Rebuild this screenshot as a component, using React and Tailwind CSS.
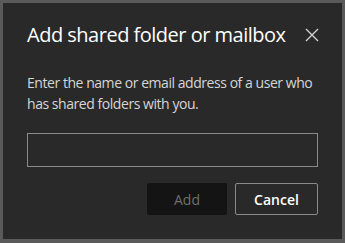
import React from "react";

export default function App() {
  return (
    <div className="w-[345px] h-[243px] bg-[#5a5a5a] pt-[3px] pl-[3px]" style={{ fontFamily: '"Open Sans", "Noto Sans", sans-serif' }}>
      <div className="w-[339px] h-[236px] bg-[#292929] pl-[24px] pr-[24px] pt-[17px] flex flex-col">
        <div className="flex items-center justify-between h-[30px]">
          <h1 className="text-[20px] leading-[30px] text-white font-normal tracking-[-0.5px]">Add shared folder or mailbox</h1>
          <svg width="14" height="14" viewBox="0 0 14 14" className="mr-[-1px]">
            <path d="M1 1 L13 13 M13 1 L1 13" stroke="#d6d6d6" strokeWidth="1.3" fill="none" />
          </svg>
        </div>
        <p className="mt-[22px] text-[14px] leading-[21px] text-[#d6d6d6] tracking-[-0.45px]">
          Enter the name or email address of a user who has shared folders with you.
        </p>
        <input className="mt-[19px] h-[34px] w-full border border-[#8a8a8a] bg-transparent outline-none" />
        <div className="mt-[16px] flex justify-end gap-[8px]">
          <button className="w-[80px] h-[32px] rounded-[2px] bg-[#141414] text-[14px] text-[#6e6e6e]">Add</button>
          <button className="w-[83px] h-[32px] rounded-[2px] border border-[#8a8a8a] text-[14px] font-semibold text-white">Cancel</button>
        </div>
      </div>
    </div>
  );
}
